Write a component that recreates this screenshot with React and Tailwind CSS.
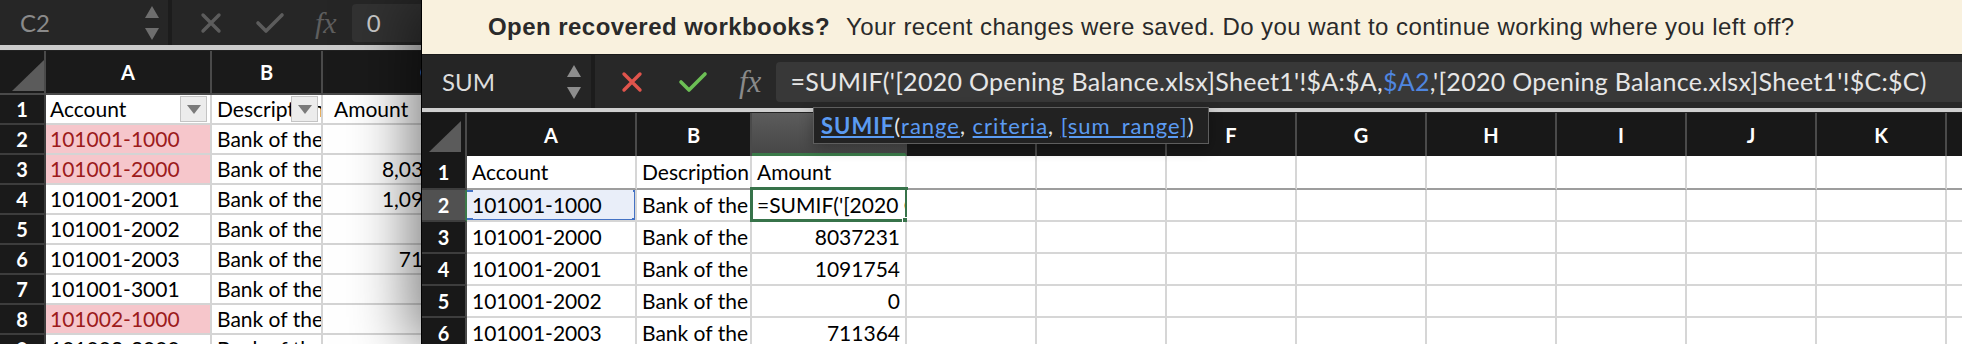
import React from 'react';

// Excel for Mac, two workbook windows: an inactive one behind, the active one in front

function XIcon({ color, size = 22 }) {
  return (
    <svg width={size} height={size} viewBox="0 0 22 22">
      <path d="M3 3 L19 19 M19 3 L3 19" stroke={color} strokeWidth="3.4" strokeLinecap="round" />
    </svg>
  );
}

function CheckIcon({ color }) {
  return (
    <svg width="30" height="22" viewBox="0 0 30 22">
      <path d="M3 11 L11 19 L27 3" stroke={color} strokeWidth="3.6" fill="none" strokeLinecap="round" strokeLinejoin="round" />
    </svg>
  );
}

function Arrows({ color }) {
  return (
    <svg width="16" height="36" viewBox="0 0 16 36">
      <polygon points="8,1 15,13 1,13" fill={color} />
      <polygon points="1,23 15,23 8,35" fill={color} />
    </svg>
  );
}

function Corner() {
  return (
    <svg width="32" height="31" viewBox="0 0 32 31">
      <polygon points="32,0 32,31 0,31" fill="#5b5b5b" />
    </svg>
  );
}

function FilterBtn() {
  return (
    <div className="absolute right-[3px] top-[1px] w-[27px] h-[26px] bg-[#ececec] border border-[#c4c4c4] flex items-center justify-center">
      <svg width="14" height="9" viewBox="0 0 14 9">
        <polygon points="0,0 14,0 7,9" fill="#7a7a7a" />
      </svg>
    </div>
  );
}

const backRows = [
  { n: 1, a: 'Account', b: 'Description', c: 'Amount', head: true },
  { n: 2, a: '101001-1000', b: 'Bank of the West', c: '', pink: true },
  { n: 3, a: '101001-2000', b: 'Bank of the West', c: '8,037,231.00', pink: true },
  { n: 4, a: '101001-2001', b: 'Bank of the West', c: '1,091,754.00' },
  { n: 5, a: '101001-2002', b: 'Bank of the West', c: '' },
  { n: 6, a: '101001-2003', b: 'Bank of the West', c: '711,364.00' },
  { n: 7, a: '101001-3001', b: 'Bank of the West', c: '' },
  { n: 8, a: '101002-1000', b: 'Bank of the West', c: '', pink: true },
  { n: 9, a: '101002-2000', b: 'Bank of the West', c: '' },
];

function BackWindow() {
  return (
    <div className="w-[530px] h-full bg-[#1b1b1b] font-['Lato',sans-serif]">
      {/* formula bar (inactive) */}
      <div className="h-[45px] bg-[#262626] flex items-center">
        <div className="w-[168px] h-full flex items-center pl-[20px] pr-[8px]">
          <span className="text-[24px] text-[#8a8a8a] flex-1">C2</span>
          <Arrows color="#6e6e6e" />
        </div>
        <div className="w-[4px] h-full bg-[#1c1c1c]" />
        <div className="w-[28px]" />
        <XIcon color="#5c5c5c" />
        <div className="w-[33px]" />
        <CheckIcon color="#5c5c5c" />
        <div className="w-[30px]" />
        <span className="font-['Liberation_Serif',serif] italic text-[30px] text-[#5e5e5e] leading-none">fx</span>
        <div className="w-[15px]" />
        <div className="h-[38px] flex-1 bg-[#323232] rounded-l-[4px] flex items-center pl-[15px] text-[24px] text-[#c9c9c9]">0</div>
      </div>
      <div className="h-[6px] bg-[#cbcbcb] border-b border-[#222]" />
      {/* column header */}
      <div className="h-[44px] flex bg-[#1a1a1a] border-b-2 border-[#4a4a4a] text-white font-bold text-[20px]">
        <div className="w-[46px] border-r-2 border-[#4a4a4a] flex items-end justify-end pb-[2px]">
          <Corner />
        </div>
        <div className="w-[166px] border-r-2 border-[#4a4a4a] flex items-center justify-center">A</div>
        <div className="w-[111px] border-r-2 border-[#4a4a4a] flex items-center justify-center">B</div>
        <div className="w-[207px] flex items-center justify-center">C</div>
      </div>
      {backRows.map((r) => (
        <div key={r.n} className="h-[30px] flex text-[21px] text-black">
          <div className="w-[46px] bg-[#1a1a1a] border-r-2 border-b-2 border-[#3d3d3d] text-white font-bold text-[20px] flex items-center justify-center">{r.n}</div>
          <div className={`w-[166px] border-r-2 border-b-2 border-[#d4d4d4] relative flex items-center pl-[4px] overflow-hidden whitespace-nowrap ${r.pink ? 'bg-[#f6c6cb] text-[#9c1b1b]' : 'bg-white'}`}>
            {r.a}
            {r.head && <FilterBtn />}
          </div>
          <div className="w-[111px] bg-white border-r-2 border-b-2 border-[#d4d4d4] relative flex items-center pl-[5px] overflow-hidden whitespace-nowrap">
            {r.b}
            {r.head && <FilterBtn />}
          </div>
          <div className={`w-[207px] bg-white border-b-2 border-[#d4d4d4] flex items-center overflow-hidden whitespace-nowrap ${r.head ? 'pl-[11px]' : 'justify-end pr-[24px]'}`}>
            {r.c}
          </div>
        </div>
      ))}
    </div>
  );
}

const frontCols = [
  { k: 'A', w: 170 },
  { k: 'B', w: 115 },
  { k: 'C', w: 155 },
  { k: 'D', w: 130 },
  { k: 'E', w: 130 },
  { k: 'F', w: 130 },
  { k: 'G', w: 130 },
  { k: 'H', w: 130 },
  { k: 'I', w: 130 },
  { k: 'J', w: 130 },
  { k: 'K', w: 130 },
  { k: 'L', w: 130 },
];

const widthClass = {
  170: 'w-[170px]',
  115: 'w-[115px]',
  155: 'w-[155px]',
  130: 'w-[130px]',
};

const frontRows = [
  { n: 1, a: 'Account', b: 'Description', c: 'Amount' },
  { n: 2, a: '101001-1000', b: 'Bank of the West', c: "=SUMIF('[2020 Opening" },
  { n: 3, a: '101001-2000', b: 'Bank of the West', c: '8037231' },
  { n: 4, a: '101001-2001', b: 'Bank of the West', c: '1091754' },
  { n: 5, a: '101001-2002', b: 'Bank of the West', c: '0' },
  { n: 6, a: '101001-2003', b: 'Bank of the West', c: '711364' },
];

function FrontWindow() {
  return (
    <div className="absolute left-[421px] top-0 right-0 bottom-0 border-l border-black bg-[#1b1b1b] shadow-[-12px_0_55px_rgba(0,0,0,0.5)] font-['Lato',sans-serif] overflow-hidden">
      {/* recovery banner */}
      <div className="h-[55px] bg-[#f9f1de] border-b border-[#1a1a1a] flex items-center pl-[66px] text-[24px] tracking-[0.45px] font-['Liberation_Sans',Arial,sans-serif] text-[#2a2a2a] whitespace-nowrap">
        <span className="font-semibold">Open recovered workbooks?</span>
        <span className="ml-[16px]">Your recent changes were saved. Do you want to continue working where you left off?</span>
      </div>
      {/* formula bar */}
      <div className="h-[53px] bg-[#282828] flex items-center">
        <div className="w-[169px] h-full bg-[#252525] flex items-center pl-[20px] pr-[9px]">
          <span className="text-[24px] text-[#dcdcdc] flex-1">SUM</span>
          <Arrows color="#8d8d8d" />
        </div>
        <div className="w-[4px] h-full bg-[#1c1c1c]" />
        <div className="w-[26px]" />
        <XIcon color="#e0544c" />
        <div className="w-[35px]" />
        <CheckIcon color="#6cbf55" />
        <div className="w-[31px]" />
        <span className="font-['Liberation_Serif',serif] italic text-[31px] text-[#8a8a8a] leading-none">fx</span>
        <div className="w-[15px]" />
        <div className="h-[40px] flex-1 bg-[#383838] rounded-l-[4px] flex items-center pl-[14px] text-[25px] tracking-[0.28px] text-[#e6e6e6] whitespace-nowrap overflow-hidden">
          =SUMIF('[2020 Opening Balance.xlsx]Sheet1'!$A:$A,<span className="text-[#4f86e0]">$A2</span>,'[2020 Opening Balance.xlsx]Sheet1'!$C:$C)
        </div>
      </div>
      <div className="h-[5px] bg-[#cfcfcf] border-b border-[#222]" />
      {/* column header */}
      <div className="h-[43px] flex bg-[#181818] text-white font-bold text-[20px]">
        <div className="w-[45px] shrink-0 border-r-2 border-[#4a4a4a] flex items-end justify-end pb-[4px] pr-[4px]">
          <Corner />
        </div>
        {frontCols.map((c) => (
          <div
            key={c.k}
            className={`${widthClass[c.w]} shrink-0 border-r-2 flex items-center justify-center ${c.k === 'C' ? 'bg-gradient-to-b from-[#5c5c5c] to-[#474747] border-[#4a4a4a] border-b-[3px] border-b-[#3b7a49]' : 'border-[#4a4a4a]'}`}
          >
            {c.k}
          </div>
        ))}
      </div>
      {frontRows.map((r) => (
        <div key={r.n} className={`flex text-[21px] text-black ${r.n === 1 ? 'h-[34px]' : 'h-[32px]'}`}>
          <div className={`w-[45px] shrink-0 border-b-2 border-[#3d3d3d] text-white font-bold text-[20px] flex items-center justify-center ${r.n === 2 ? 'bg-[#515151] border-r-2 border-r-[#3b7a49]' : 'bg-[#181818] border-r-2 border-r-[#4a4a4a]'}`}>
            {r.n}
          </div>
          {frontCols.map((c) => {
            const line = r.n === 1 ? 'border-b-2 border-b-[#9d9d9d]' : 'border-b-2 border-b-[#d6d6d6]';
            let content = null;
            let extra = 'bg-white';
            if (c.k === 'A') {
              content = r.a;
              if (r.n === 2) extra = 'bg-[#e9eef9]';
            } else if (c.k === 'B') {
              content = r.b;
            } else if (c.k === 'C') {
              content = r.c;
            }
            const right = c.k === 'C' && r.n > 2;
            const active = c.k === 'C' && r.n === 2;
            return (
              <div
                key={c.k}
                className={`${widthClass[c.w]} shrink-0 relative border-r-2 border-r-[#d6d6d6] ${line} ${extra} flex items-center whitespace-nowrap ${right ? 'justify-end pr-[5px]' : 'pl-[5px]'} ${active ? '' : 'overflow-hidden'}`}
              >
                {active ? <div className="overflow-hidden w-full">{content}</div> : content}
                {c.k === 'A' && r.n === 2 && (
                  <>
                    <div className="absolute left-0 right-[-2px] top-[-3px] bottom-[-2px] border-y-[3px] border-[#4472c4]" />
                    <div className="absolute left-[-2px] top-[-5px] w-[8px] h-[7px] bg-[#4472c4]" />
                    <div className="absolute right-[-6px] top-[-5px] w-[8px] h-[7px] bg-[#4472c4]" />
                    <div className="absolute left-[-2px] bottom-[-5px] w-[8px] h-[7px] bg-[#4472c4]" />
                    <div className="absolute right-[-6px] bottom-[-6px] w-[9px] h-[8px] bg-[#4472c4]" />
                    <div className="absolute right-[-2px] top-[2px] bottom-[2px] w-[3px] bg-[#4472c4]" />
                  </>
                )}
                {active && (
                  <>
                    <div className="absolute left-[-2px] right-[-3px] top-[-3px] bottom-[-2px] border-[3px] border-[#37734a]" />
                    <div className="absolute right-[-6px] bottom-[-6px] w-[9px] h-[9px] bg-[#37734a] border border-white" />
                  </>
                )}
              </div>
            );
          })}
        </div>
      ))}
      {/* function argument tooltip */}
      <div className="absolute left-[391px] top-[107px] w-[396px] h-[37px] bg-[#222] border border-[#5e5e5e] shadow-[0_4px_14px_rgba(0,0,0,0.3)] flex items-center pl-[7px] text-[22px] tracking-[1px] text-[#e8e8e8] whitespace-nowrap">
        <span className="font-bold text-[#5b9bf2] underline">SUMIF</span>(
        <span className="text-[#5b9bf2] underline">range</span>,&nbsp;
        <span className="text-[#5b9bf2] underline">criteria</span>,&nbsp;
        <span className="text-[#5b9bf2] underline">[sum_range]</span>)
      </div>
    </div>
  );
}

export default function App() {
  return (
    <div className="relative w-[1962px] h-[344px] overflow-hidden bg-[#1b1b1b]">
      <BackWindow />
      <FrontWindow />
    </div>
  );
}
